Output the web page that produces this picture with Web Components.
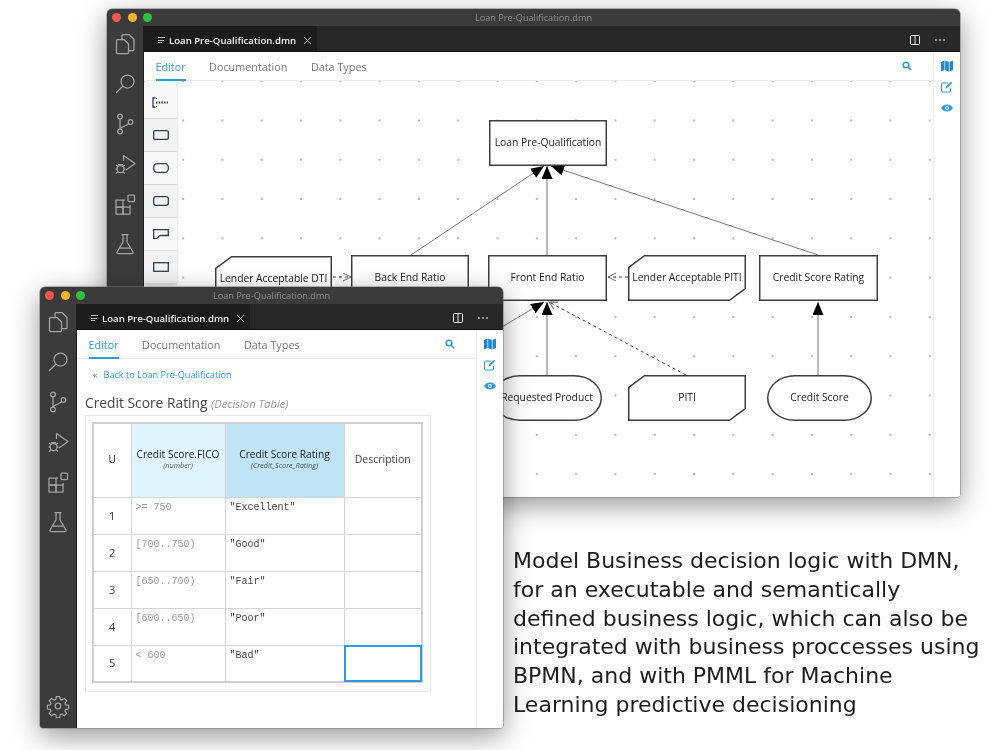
<!DOCTYPE html>
<html lang="en">
<head>
<meta charset="utf-8">
<title>DMN editor</title>
<style>
html,body{margin:0;padding:0;background:#fff}
body{width:1000px;height:750px;overflow:hidden;font-family:"Open Sans",sans-serif}
</style>
</head>
<body>
<desktop-stage>
  <app-window style="left:107px;top:9px;width:853px;height:488px;z-index:1">
    <dmn-canvas>
      <dmn-palette></dmn-palette>
      <dmn-node kind="cut-tl" x="215" y="256" w="117" h="45">Lender Acceptable DTI</dmn-node>
      <dmn-node kind="rect" x="351" y="255" w="118" h="46">Back End Ratio</dmn-node>
      <dmn-node kind="rect" x="488" y="255" w="119" h="46">Front End Ratio</dmn-node>
      <dmn-node kind="cut-br" x="628" y="255" w="118" h="46">Lender Acceptable PITI</dmn-node>
      <dmn-node kind="rect" x="759" y="255" w="119" h="46">Credit Score Rating</dmn-node>
      <dmn-node kind="rect" x="489" y="120" w="118" h="46">Loan Pre-Qualification</dmn-node>
      <dmn-node kind="oval" x="492" y="375" w="110" h="46">Requested Product</dmn-node>
      <dmn-node kind="cut-tl-br" x="628" y="375" w="118" h="46">PITI</dmn-node>
      <dmn-node kind="oval" x="767" y="375" w="105" h="46">Credit Score</dmn-node>
    </dmn-canvas>
  </app-window>
  <app-window gear style="left:40px;top:287px;width:463px;height:441px;z-index:2">
    <table-view></table-view>
  </app-window>
  <caption-text>Model Business decision logic with DMN, for an executable and semantically defined business logic, which can also be integrated with business proccesses using BPMN, and with PMML for Machine Learning predictive decisioning</caption-text>
</desktop-stage>
<script>
const ICONS = {
  files:'<path d="M9 7V3.5a1 1 0 0 1 1-1h6l5 5v10a1 1 0 0 1-1 1h-4.500"/><path d="M4.500 7.500h6.500l4.500 4.500v8.500a1 1 0 0 1-1 1H4.500a1 1 0 0 1-1-1v-12a1 1 0 0 1 1-1z"/>',
  search:'<circle cx="14.500" cy="9.500" r="6.500"/><path d="M9.800 14.200L3 21"/>',
  git:'<circle cx="7" cy="4.500" r="2.300"/><circle cx="7" cy="19.500" r="2.300"/><circle cx="17.500" cy="10" r="2.300"/><path d="M7 6.800v10.400"/><path d="M15.800 11.700c-2 2.600-6 2-8.800 5"/>',
  debug:'<path d="M10.500 9V3.500L22 11.500 13 18"/><circle cx="7.500" cy="17" r="3.500"/><path d="M3 13l2 1.500M12 13l-2 1.500M2.500 17h1.500M11 17h1.500M3 21.500l2-1.800M12 21.500l-2-1.800M5 12.500h5"/>',
  ext:'<rect x="3" y="8" width="7" height="7" /><rect x="3" y="15" width="7" height="7"/><rect x="10" y="15" width="7" height="7"/><rect x="15" y="3" width="6.500" height="6.500" rx="1"/><path d="M10 8h2M17 13v2"/>',
  flask:'<path d="M8.500 2.500h7M10 2.500v7.500L4 20a1 1 0 0 0 .9 1.500h14.200a1 1 0 0 0 .9-1.500L14 10V2.500M7 16h10"/>',
  gear:'<circle cx="12" cy="12" r="2.800"/><path d="M10.300 2.500h3.400l.5 2.900 1.700.7 2.400-1.700 2.400 2.400-1.700 2.400.7 1.700 2.900.5v3.400l-2.900.5-.7 1.700 1.700 2.400-2.400 2.400-2.400-1.700-1.700.7-.5 2.900h-3.400l-.5-2.900-1.700-.7-2.400 1.700-2.400-2.400 1.700-2.400-.7-1.700-2.900-.5v-3.400l2.900-.5.7-1.700-1.700-2.400 2.400-2.400 2.400 1.700 1.700-.7z"/>'
};
function icon(n,s){return `<svg width="${s}" height="${s}" viewBox="0 0 24 24" fill="none" stroke="currentColor" stroke-width="1.250" stroke-linejoin="round" aria-hidden="true">${ICONS[n]}</svg>`}

class Base extends HTMLElement{
  render(html){ if(!this.shadowRoot) this.attachShadow({mode:'open'}); const t=document.createElement('template'); t.innerHTML=html; this.shadowRoot.appendChild(t.content.cloneNode(true)); }
}
customElements.define('desktop-stage',class extends Base{connectedCallback(){this.render(`<style>:host{display:block;position:relative;width:1000px;height:750px;overflow:hidden;background:#fff;filter:blur(.5px)}</style><slot></slot>`)}});

customElements.define('activity-bar',class extends Base{connectedCallback(){
  const items=['files','search','git','debug','ext','flask'].map(n=>`<div class="i">${icon(n,24)}</div>`).join('');
  this.render(`<style>
  :host{display:flex;flex-direction:column;width:36px;flex:none;background:#3b3b3b;color:#a4a4a4;border-right:1px solid #1f1f1f;gap:4px}
  .i{height:36px;display:flex;align-items:center;justify-content:center}
  .g{margin-top:auto;height:44px}
  </style>${items}${this.hasAttribute('gear')?`<div class="i g">${icon('gear',24)}</div>`:''}`);
}});

customElements.define('tab-strip',class extends Base{connectedCallback(){
  this.render(`<style>
  :host{display:flex;align-items:stretch;height:25px;background:#272727;border-bottom:1px solid #111;flex:none}
  .tab{width:173px;background:#1c1c1c;display:flex;align-items:center;color:#f2f2f2;font:600 9.600px "Open Sans",sans-serif;box-sizing:border-box;padding:3px 0 0 14px;white-space:nowrap}
  .ham{width:7px;height:7px;margin-right:4px;border-top:1px solid #bbb;position:relative;flex:none;box-sizing:border-box}
  .ham i{display:block;height:1px;background:#bbb;margin-top:2px;width:6px}
  .ham i+i{width:4px;margin-top:1px}
  .x{margin-left:7px;color:#ccc;display:flex}
  .sp{flex:1}
  .a{display:flex;align-items:center;gap:14px;padding:3px 15px 0 0;color:#ddd}
  .d{display:flex;gap:2px}.d i{width:2px;height:2px;border-radius:50%;background:#bbb;display:block}
  </style>
  <div class="tab"><span class="ham"><i></i><i></i></span><span>Loan Pre-Qualification.dmn</span><span class="x"><svg width="9" height="9" viewBox="0 0 9 9" stroke="currentColor" stroke-width=".9" fill="none"><path d="M1 1l7 7M8 1L1 8"/></svg></span></div>
  <div class="sp"></div>
  <div class="a"><svg width="12" height="12" viewBox="0 0 12 12" fill="none" stroke="#e6e6e6" stroke-width="1"><rect x="1.500" y="1.500" width="9" height="9" rx="1"/><path d="M6 1.500v9"/></svg><span class="d"><i></i><i></i><i></i></span></div>`);
}});

customElements.define('editor-tabs',class extends Base{connectedCallback(){
  this.render(`<style>
  :host{display:flex;align-items:stretch;height:28px;border-bottom:1px solid #ececec;flex:none;padding-left:11.500px;font:400 10.800px "Open Sans",sans-serif;color:#777;background:#fff;position:relative}
  span{display:flex;align-items:center;margin-right:23.500px;white-space:nowrap;padding-top:1px}
  .on{color:#2a9bdc;box-shadow:0 1px 0 #2a9bdc, inset 0 -1px 0 #2a9bdc}
  svg{position:absolute;right:21px;top:9px}
  </style><span class="on">Editor</span><span>Documentation</span><span>Data Types</span>
  <svg width="10" height="10" viewBox="0 0 10 10" fill="none" stroke="#2a9bdc" stroke-width="1.600"><circle cx="4" cy="4" r="2.800"/><path d="M6 6l3 3"/></svg>`);
}});

customElements.define('side-rail',class extends Base{connectedCallback(){
  this.render(`<style>
  :host{display:flex;flex-direction:column;align-items:center;width:26px;flex:none;border-left:1px solid #f0f0f0;padding-top:8px;gap:9px;box-sizing:content-box;background:#fff}
  svg{display:block}
  </style>
  <svg width="12" height="12" viewBox="0 0 12 12" fill="#1e88d0"><path d="M0 2l3.500-1.500V10L0 11.500zM4.200.5L7.800 2v9.500L4.200 10zM8.500 2L12 .5V10l-3.500 1.500z"/></svg>
  <svg width="12" height="12" viewBox="0 0 12 12" fill="none" stroke="#2a9bdc" stroke-width="1"><path d="M9.500 7v3a1 1 0 0 1-1 1H1.500a1 1 0 0 1-1-1V3a1 1 0 0 1 1-1H7"/><path d="M4.500 7.500l.5-2L10 .8l1.200 1.200-5 4.900z" fill="#2a9bdc" stroke="none"/></svg>
  <svg width="12" height="12" viewBox="0 0 12 12"><path d="M0 6c1.500-2.500 3.500-3.500 6-3.500S10.500 3.500 12 6c-1.500 2.500-3.500 3.500-6 3.500S1.500 8.500 0 6z" fill="#2a9bdc"/><circle cx="6" cy="6" r="2" fill="#fff"/><circle cx="6" cy="6" r="1.100" fill="#2a9bdc"/></svg>`);
}});

customElements.define('app-window',class extends Base{connectedCallback(){
  this.render(`<style>
  :host{display:flex;flex-direction:column;position:absolute;box-sizing:border-box;border-radius:5px 5px 3px 3px;background:#fff;overflow:hidden;box-shadow:0 0 0 .5px #777,0 8px 28px rgba(0,0,0,.42);font-family:"Open Sans",sans-serif}
  .title{height:17px;flex:none;background:#3b3b3b;position:relative;display:flex;align-items:center;justify-content:center;color:#8f8f8f;font-size:9.200px;white-space:nowrap}
  .l{position:absolute;left:5px;top:4px;display:flex;gap:6.500px}
  .l i{display:block;width:9px;height:9px;border-radius:50%}
  .m{flex:1;display:flex;min-height:0}
  .c{flex:1;display:flex;flex-direction:column;min-width:0}
  .e{flex:1;display:flex;min-height:0}
  .b{flex:1;display:flex;flex-direction:column;min-width:0;position:relative}
  </style>
  <div class="title"><div class="l"><i style="background:#f0564e"></i><i style="background:#f6b52a"></i><i style="background:#2fc23f"></i></div>Loan Pre-Qualification.dmn</div>
  <div class="m"><activity-bar ${this.hasAttribute('gear')?'gear':''}></activity-bar>
  <div class="c"><tab-strip></tab-strip><div class="e"><div class="b"><editor-tabs></editor-tabs><slot></slot></div><side-rail></side-rail></div></div></div>`);
}});

customElements.define('dmn-canvas',class extends Base{connectedCallback(){
  const ln=(a,b,c,d,m,dash)=>`<line x1="${a}" y1="${b}" x2="${c}" y2="${d}" stroke="${dash?'#444':'#777'}" stroke-width="1" ${dash?'stroke-dasharray="3 3"':''} marker-end="url(#${m})"/>`;
  this.render(`<style>
  :host{display:block;flex:1;position:relative;overflow:hidden;background-color:#fff;
    background-image:radial-gradient(circle at center,#b4b4b4 0,#b4b4b4 .7px,transparent 1px);background-size:39.300px 39.300px;background-position:19.500px -19.500px}
  svg{position:absolute;left:0;top:0;width:100%;height:100%}
  </style>
  <svg viewBox="144 81 789 416" preserveAspectRatio="xMinYMin slice">
   <defs>
    <marker id="s" markerWidth="14" markerHeight="12" refX="13" refY="5.500" orient="auto" markerUnits="userSpaceOnUse"><path d="M0 0L13 5.500 0 11z" fill="#000"/></marker>
    <marker id="o" markerWidth="10" markerHeight="10" refX="8" refY="4" orient="auto" markerUnits="userSpaceOnUse"><path d="M0 0L8 4 0 8" fill="none" stroke="#555" stroke-width=".9"/></marker>
   </defs>
   ${ln(411,255,544,166,'s')}${ln(818,255,551,166,'s')}${ln(547,255,547,166,'s')}
   ${ln(547,375,547,302,'s')}${ln(490,334,544,302,'s')}${ln(818,375,818,302,'s')}
   ${ln(686,375,549,302,'o',1)}${ln(333,277,351,277,'o',1)}${ln(628,277,608,277,'o',1)}
  </svg><slot></slot>`);
}});

customElements.define('dmn-node',class extends Base{connectedCallback(){
  const x=+this.getAttribute('x')-144,y=+this.getAttribute('y')-81,w=+this.getAttribute('w'),h=+this.getAttribute('h'),k=this.getAttribute('kind');
  const c=16,d=12;
  const pts={ 'rect':`0,0 ${w},0 ${w},${h} 0,${h}`,
    'cut-tl':`${c},0 ${w},0 ${w},${h} 0,${h} 0,${d}`,
    'cut-br':`${c},0 ${w},0 ${w},${h-d} ${w-c},${h} 0,${h} 0,${d}`,
    'cut-tl-br':`${c},0 ${w},0 ${w},${h-d} ${w-c},${h} 0,${h} 0,${d}`}[k];
  const shape=k==='oval'?`<rect x=".75" y=".75" width="${w-1.5}" height="${h-1.5}" rx="${h/2+4}" ry="${h/2-.75}"/>`:`<polygon points="${pts}" transform="translate(.75 .75) scale(${(w-1.5)/w} ${(h-1.5)/h})"/>`;
  this.render(`<style>
  :host{position:absolute;left:${x}px;top:${y}px;width:${w}px;height:${h}px;box-sizing:border-box;padding-bottom:2px;display:flex;align-items:center;justify-content:center;font:400 10.300px "Open Sans",sans-serif;color:#222;white-space:nowrap}
  svg{position:absolute;inset:0}
  span{position:relative}
  </style>
  <svg width="${w}" height="${h}" fill="#fff" stroke="#3c3c3c" stroke-width="1.500">${shape}</svg><span><slot></slot></span>`);
}});

customElements.define('dmn-palette',class extends Base{connectedCallback(){
  const s='fill="none" stroke="#2c3e50" stroke-width="1.300"';
  const g=[
   `<svg width="17" height="11" viewBox="0 0 17 11" ${s}><path d="M3.500 1H1v9h2.500"/><path d="M4 5.500h12" stroke-width="2" stroke-dasharray="1.500 1.200"/><path d="M4 1.500h1M4 9.500h1" stroke-width="1"/></svg>`,
   `<svg width="16" height="10" viewBox="0 0 16 10" ${s}><rect x=".7" y=".7" width="14.600" height="8.600" rx="1.200"/></svg>`,
   `<svg width="16" height="10" viewBox="0 0 16 10" ${s}><rect x=".7" y=".7" width="14.600" height="8.600" rx="3.500"/></svg>`,
   `<svg width="16" height="10" viewBox="0 0 16 10" ${s}><rect x=".7" y=".7" width="14.600" height="8.600" rx="2"/></svg>`,
   `<svg width="16" height="10" viewBox="0 0 16 10" ${s}><path d="M.7 .7h14.600v5.800H7.500c-2 0-2.500 2.800-4 2.800H.7z"/></svg>`,
   `<svg width="16" height="10" viewBox="0 0 16 10" ${s}><rect x=".7" y=".7" width="14.600" height="8.600"/></svg>`
  ].map((v,i)=>`<div class="${i%2?'a':''}">${v}</div>`).join('');
  this.render(`<style>
  :host{position:absolute;left:0;top:5px;width:33px;display:flex;flex-direction:column;border-radius:0 2px 2px 0;box-shadow:0 1px 3px rgba(0,0,0,.22);background:#f7f7f7;z-index:3}
  div{height:32px;display:flex;align-items:center;justify-content:center;border-bottom:1px solid #d9d9d9;background:#f8f8f8}
  .a{background:#f3f3f3}
  </style>${g}`);
}});

customElements.define('table-view',class extends Base{connectedCallback(){
  const rows=[['1','&gt;= 750','"Excellent"'],['2','[700..750)','"Good"'],['3','[650..700)','"Fair"'],['4','[600..650)','"Poor"'],['5','&lt; 600','"Bad"']];
  this.render(`<style>
  :host{display:flex;flex-direction:column;flex:1;padding:0 0 0 8px;font-family:"Open Sans",sans-serif;background:#fff}
  .back{height:15px;margin-top:8px;padding-left:8px;display:flex;align-items:center;gap:6px;font-size:9.150px;color:#2a9bdc;white-space:nowrap}
  .back i{font-style:normal;color:#777}
  h2{margin:11px 0 0;font-weight:400;font-size:13.800px;line-height:20px;height:22px;color:#444;white-space:nowrap}
  h2 em{font-size:11.200px;color:#999;margin-left:0}
  .box{align-self:flex-start;border:1px solid #e8e8e8;padding:6px 7px 8px 7px;background:#fff}
  table{border-collapse:collapse;table-layout:fixed;width:329px;border:2px solid #cfcfcf;margin-left:-1px}
  td,th{border:1px solid #d4d4d4;padding:0;height:37px;box-sizing:border-box}
  th{height:74px;font-weight:400;font-size:10.200px;color:#222;line-height:12px;text-align:center;padding-bottom:3px}
  th small{display:block;font-size:7.300px;font-style:italic;color:#555;line-height:10px}
  th.d{font-size:10.500px;color:#444;padding-bottom:2px}
  .n{font-size:11px;color:#333;text-align:center;padding-bottom:1px}
  .m{font:10px "Liberation Mono",monospace;vertical-align:top;padding:4px 0 0 4px;white-space:nowrap}
  .i{color:#999}.o{color:#444}
  .h1{background:#dff4fd}.h2{background:#bfe4f6}
  .sel{outline:2px solid #2a9be0;outline-offset:-2px}
  </style>
  <div class="back"><i>«</i><span>Back to Loan Pre-Qualification</span></div>
  <h2>Credit Score Rating <em>(Decision Table)</em></h2>
  <div class="box"><table>
  <colgroup><col style="width:38px"><col style="width:94px"><col style="width:119px"><col style="width:78px"></colgroup>
  <tr><th>U</th><th class="h1">Credit Score.FICO<small>(number)</small></th><th class="h2">Credit Score Rating<small>(Credit_Score_Rating)</small></th><th class="d">Description</th></tr>
  ${rows.map((r,i)=>`<tr><td class="n">${r[0]}</td><td class="m i">${r[1]}</td><td class="m o">${r[2]}</td><td class="${i==4?'sel':''}"></td></tr>`).join('')}
  </table></div>`);
}});

customElements.define('caption-text',class extends Base{connectedCallback(){
  this.render(`<style>:host{position:absolute;left:513px;top:547px;width:473px;font:22px/28.800px "DejaVu Sans",sans-serif;color:#1d1d1d}</style><slot></slot>`);
}});
</script>
</body>
</html>
